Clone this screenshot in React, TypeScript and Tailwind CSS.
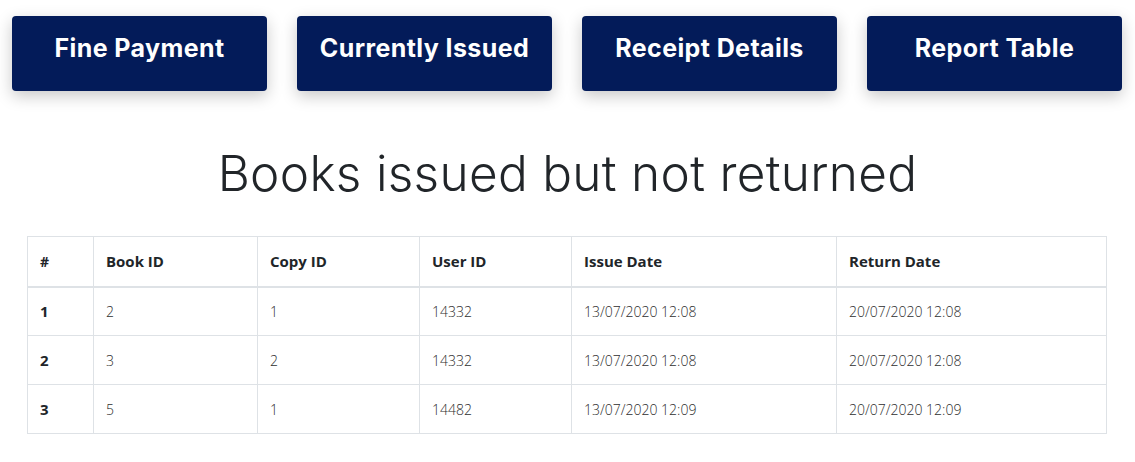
import React from "react";

const buttons = ["Fine Payment", "Currently Issued", "Receipt Details", "Report Table"];

const rows = [
  { n: "1", book: "2", copy: "1", user: "14332", issue: "13/07/2020 12:08", ret: "20/07/2020 12:08" },
  { n: "2", book: "3", copy: "2", user: "14332", issue: "13/07/2020 12:08", ret: "20/07/2020 12:08" },
  { n: "3", book: "5", copy: "1", user: "14482", issue: "13/07/2020 12:09", ret: "20/07/2020 12:09" },
];

export default function App() {
  return (
    <div className="w-[1135px] h-[462px] bg-white overflow-hidden">
      <div className="flex gap-[30px] pl-[12px] pt-[16px]">
        {buttons.map((b) => (
          <div
            key={b}
            className="w-[255px] h-[75px] rounded-[4px] bg-[#031b59] shadow-[0_5px_16px_rgba(0,0,0,0.22)] flex justify-center pt-[17px] text-white text-[25px] leading-[30px] font-bold tracking-[0.4px]"
            style={{ fontFamily: "Inter, 'Open Sans', sans-serif" }}
          >
            {b}
          </div>
        ))}
      </div>
      <h1
        className="mt-[52px] text-center text-[49.5px] leading-[60px] font-light text-[#212529] tracking-[0.3px]"
        style={{ fontFamily: "Inter, 'Open Sans', sans-serif" }}
      >
        Books issued but not returned
      </h1>
      <div className="pl-[27px] mt-[33px]">
        <table
          className="w-[1080px] table-fixed border-collapse text-[16px] text-[#212529]"
          style={{ fontFamily: "'Open Sans', 'Noto Sans', sans-serif" }}
        >
          <thead>
            <tr className="h-[50px]">
              <th className="w-[66px] border border-[#dee2e6] border-b-2 px-[12px] text-left text-[14px] font-bold">#</th>
              <th className="w-[164px] border border-[#dee2e6] border-b-2 px-[12px] text-left text-[15px] font-bold">Book ID</th>
              <th className="w-[162px] border border-[#dee2e6] border-b-2 px-[12px] text-left text-[15px] font-bold">Copy ID</th>
              <th className="w-[152px] border border-[#dee2e6] border-b-2 px-[12px] text-left text-[15px] font-bold">User ID</th>
              <th className="w-[265px] border border-[#dee2e6] border-b-2 px-[12px] text-left text-[15px] font-bold">Issue Date</th>
              <th className="border border-[#dee2e6] border-b-2 px-[12px] text-left text-[15px] font-bold">Return Date</th>
            </tr>
          </thead>
          <tbody>
            {rows.map((r) => (
              <tr key={r.n} className="h-[49px]">
                <td className="border border-[#dee2e6] px-[12px] text-[15px] font-bold">{r.n}</td>
                <td className="border border-[#dee2e6] px-[12px] text-[14px] font-light text-[#2e2e2e]">{r.book}</td>
                <td className="border border-[#dee2e6] px-[12px] text-[14px] font-light text-[#2e2e2e]">{r.copy}</td>
                <td className="border border-[#dee2e6] px-[12px] text-[14px] font-light text-[#2e2e2e]">{r.user}</td>
                <td className="border border-[#dee2e6] px-[12px] text-[14px] font-light text-[#2e2e2e]">{r.issue}</td>
                <td className="border border-[#dee2e6] px-[12px] text-[14px] font-light text-[#2e2e2e]">{r.ret}</td>
              </tr>
            ))}
          </tbody>
        </table>
      </div>
    </div>
  );
}
